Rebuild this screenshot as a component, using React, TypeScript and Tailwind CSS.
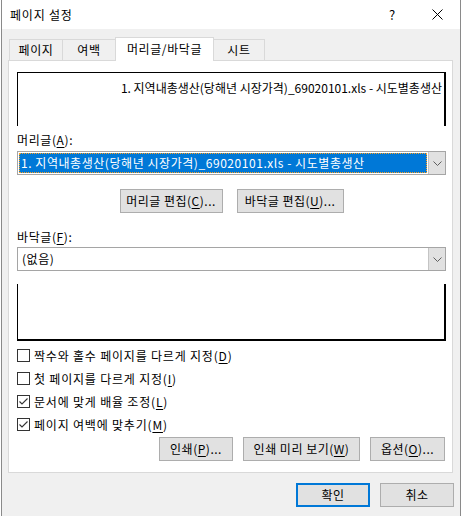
import React from "react";

const U = ({ c }: { c: string }) => <span className="underline underline-offset-[2px]">{c}</span>;

const Chevron = () => (
  <svg width="9" height="5" viewBox="0 0 9 5">
    <path d="M0.5 0.5 L4.5 4.5 L8.5 0.5" stroke="#5f5f5f" fill="none" strokeWidth="1" />
  </svg>
);

function Combo({ children }: { children: React.ReactNode }) {
  return (
    <div className="flex h-[24px] border border-[#a5a5a5] bg-white">
      <div className="flex-1 flex items-center p-[1px] min-w-0">{children}</div>
      <div className="w-[17px] flex items-center justify-center bg-[#e1e1e1] border-l border-[#c4c4c4]">
        <Chevron />
      </div>
    </div>
  );
}

function Btn({ children, w, primary }: { children: React.ReactNode; w: string; primary?: boolean }) {
  return (
    <div
      className={`${w} h-[24px] flex items-center justify-center bg-[#e1e1e1] text-[12px] tracking-[0.5px] text-black ${
        primary ? "border-2 border-[#0078d7]" : "border border-[#adadad]"
      }`}
    >
      {children}
    </div>
  );
}

function Check({ checked, children }: { checked?: boolean; children: React.ReactNode }) {
  return (
    <div className="h-[23px] flex items-center">
      <div className="w-[13px] h-[13px] border border-[#333333] bg-white flex items-center justify-center">
        {checked && (
          <svg width="11" height="11" viewBox="0 0 11 11">
            <path d="M1.5 5.5 L4 8 L9.5 2.5" stroke="#333333" fill="none" strokeWidth="1.1" />
          </svg>
        )}
      </div>
      <span className="ml-[4px] text-[12px] leading-[16px] tracking-[0.8px]">{children}</span>
    </div>
  );
}

export default function App() {
  return (
    <div className="w-[462px] h-[516px] bg-white flex font-['Noto_Sans_CJK_KR',sans-serif] text-black">
      <div className="ml-px w-[460px] h-full border-x border-[#8a8a8a] flex flex-col bg-[#f0f0f0]">
        {/* Title bar */}
        <div className="h-[29px] bg-white flex items-center shrink-0">
          <span className="ml-[8px] text-[12px] leading-[16px] tracking-[0.8px]">페이지 설정</span>
          <div className="flex-1" />
          <span className="text-[13px] leading-[16px] w-[12px] text-center">?</span>
          <div className="w-[34px]" />
          <svg width="11" height="11" viewBox="0 0 11 11" className="mr-[17px]">
            <path d="M0.5 0.5 L10.5 10.5 M10.5 0.5 L0.5 10.5" stroke="#000" strokeWidth="1" />
          </svg>
        </div>

        {/* Tabs */}
        <div className="mt-[8px] ml-[7px] h-[24px] -mb-px flex items-end relative z-10 text-[12px] leading-[16px] tracking-[0.6px]">
          <div className="w-[53px] h-[21px] mb-px border-t border-l border-[#d9d9d9] flex items-center justify-center">페이지</div>
          <div className="w-[53px] h-[21px] mb-px border-t border-l border-[#d9d9d9] flex items-center justify-center">여백</div>
          <div className="w-[99px] h-full border-t border-x border-[#d9d9d9] bg-white flex items-center justify-center pb-[2px]">
            머리글/바닥글
          </div>
          <div className="w-[51px] h-[21px] mb-px border-t border-r border-[#d9d9d9] flex items-center justify-center">
            시트
          </div>
        </div>

        {/* Panel */}
        <div className="ml-[6px] w-[445px] h-[413px] border border-[#d9d9d9] bg-white pl-[8px] pr-[6px] flex flex-col text-[12px] leading-[16px]">
          {/* header preview */}
          <div className="mt-[11px] h-[54px] border-t border-l border-r-2 border-black pr-[2px] pt-[7px] flex justify-end">
            <span>1. 지역내총생산(당해년 시장가격)_69020101.xls - 시도별총생산</span>
          </div>

          <div className="mt-[6px] h-[16px] tracking-[0.6px]">
            머리글(<U c="A" />):
          </div>
          <div className="mt-[3px]">
            <Combo>
              <div className="h-full flex-1 bg-[#0078d7] outline-1 outline-dotted outline-[#ffa020] -outline-offset-1 text-white flex items-center pl-[2px] tracking-[0.55px]">
                1. 지역내총생산(당해년 시장가격)_69020101.xls - 시도별총생산
              </div>
            </Combo>
          </div>

          <div className="mt-[14px] flex justify-center gap-[14px]">
            <Btn w="w-[103px]">
              머리글 편집(<U c="C" />)...
            </Btn>
            <Btn w="w-[107px]">
              바닥글 편집(<U c="U" />)...
            </Btn>
          </div>

          <div className="mt-[16px] h-[16px] tracking-[0.6px]">
            바닥글(<U c="F" />):
          </div>
          <div className="mt-[2px]">
            <Combo>
              <span className="pl-[3px] tracking-[0.55px]">(없음)</span>
            </Combo>
          </div>

          {/* footer preview */}
          <div className="mt-[13px] h-[57px] border-l border-r-2 border-b-2 border-black" />

          <div className="mt-[3px] flex flex-col">
            <Check>
              짝수와 홀수 페이지를 다르게 지정(<U c="D" />)
            </Check>
            <Check>
              첫 페이지를 다르게 지정(<U c="I" />)
            </Check>
            <Check checked>
              문서에 맞게 배율 조정(<U c="L" />)
            </Check>
            <Check checked>
              페이지 여백에 맞추기(<U c="M" />)
            </Check>
          </div>

          <div className="mt-[1px] flex justify-end gap-[10px] pr-px">
            <Btn w="w-[74px]">
              인쇄(<U c="P" />)...
            </Btn>
            <Btn w="w-[117px]">
              인쇄 미리 보기(<U c="W" />)
            </Btn>
            <Btn w="w-[75px]">
              옵션(<U c="O" />)...
            </Btn>
          </div>
        </div>

        {/* Bottom buttons */}
        <div className="mt-[10px] flex justify-end gap-[10px] pr-[6px]">
          <Btn w="w-[74px]" primary>
            확인
          </Btn>
          <Btn w="w-[74px]">취소</Btn>
        </div>
      </div>
    </div>
  );
}
